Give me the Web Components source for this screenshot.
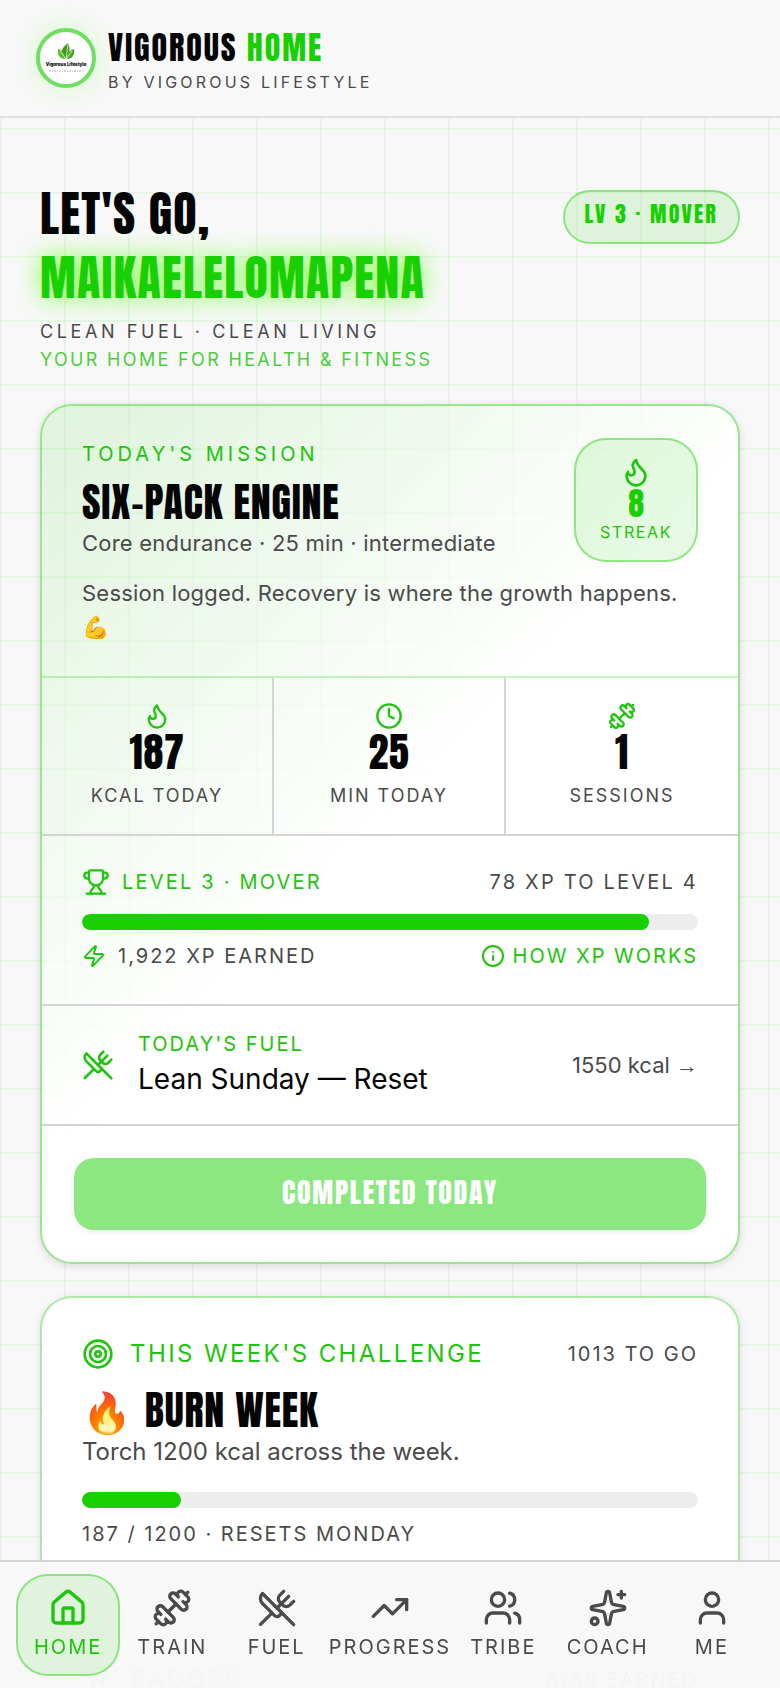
<!DOCTYPE html>
<html lang="en">
<head>
<meta charset="utf-8">
<meta name="viewport" content="width=device-width, initial-scale=1">
<title>Vigorous Home</title>
<style>
  :root {
    --green: #18d000;
    --green-text: #1fc40c;
    --ink: #050505;
    --muted: #4a4a4a;
    --line: #d4d4d4;
    --track: #ededed;
    --page: #f8f8f8;
    --tint: rgba(24, 208, 0, 0.11);
    --edge: rgba(24, 208, 0, 0.42);
    --display: Anton, Impact, "Roboto Condensed", sans-serif;
  }
  body {
    margin: 0;
    background: var(--page);
    color: var(--ink);
    font-family: Inter, "Liberation Sans", sans-serif;
    font-optical-sizing: none;
  }
</style>
</head>
<body>
<vh-app></vh-app>

<script>
const ICONS = {
  home: `<path d="M15 21v-8a1 1 0 0 0-1-1h-4a1 1 0 0 0-1 1v8"/><path d="M3 10a2 2 0 0 1 .709-1.528l7-6a2 2 0 0 1 2.582 0l7 6A2 2 0 0 1 21 10v9a2 2 0 0 1-2 2H5a2 2 0 0 1-2-2z"/>`,
  dumbbell: `<path d="M17.596 12.768a2 2 0 1 0 2.829-2.829l-1.768-1.767a2 2 0 0 0 2.828-2.829l-2.828-2.828a2 2 0 0 0-2.829 2.828l-1.767-1.768a2 2 0 1 0-2.829 2.829z"/><path d="m2.5 21.5 1.4-1.4"/><path d="m20.1 3.9 1.4-1.4"/><path d="M5.343 21.485a2 2 0 1 0 2.829-2.828l1.767 1.768a2 2 0 1 0 2.829-2.829l-6.364-6.364a2 2 0 1 0-2.829 2.829l1.768 1.767a2 2 0 0 0-2.828 2.829z"/><path d="m9.6 14.4 4.8-4.8"/>`,
  utensils: `<path d="m16 2-2.3 2.3a3 3 0 0 0 0 4.2l1.8 1.8a3 3 0 0 0 4.2 0L22 8"/><path d="M15 15 3.3 3.3a4.2 4.2 0 0 0 0 6l7.3 7.3c.7.7 2 .7 2.8 0L15 15Zm0 0 7 7"/><path d="m2.1 21.8 6.4-6.3"/><path d="m19 5-7 7"/>`,
  trend: `<path d="M16 7h6v6"/><path d="m22 7-8.5 8.5-5-5L2 17"/>`,
  users: `<path d="M16 21v-2a4 4 0 0 0-4-4H6a4 4 0 0 0-4 4v2"/><path d="M16 3.128a4 4 0 0 1 0 7.744"/><path d="M22 21v-2a4 4 0 0 0-3-3.87"/><circle cx="9" cy="7" r="4"/>`,
  sparkles: `<path d="M11.017 2.814a1 1 0 0 1 1.966 0l1.051 5.558a2 2 0 0 0 1.594 1.594l5.558 1.051a1 1 0 0 1 0 1.966l-5.558 1.051a2 2 0 0 0-1.594 1.594l-1.051 5.558a1 1 0 0 1-1.966 0l-1.051-5.558a2 2 0 0 0-1.594-1.594l-5.558-1.051a1 1 0 0 1 0-1.966l5.558-1.051a2 2 0 0 0 1.594-1.594z"/><path d="M20 2v4"/><path d="M22 4h-4"/><circle cx="4" cy="20" r="2"/>`,
  user: `<path d="M19 21v-2a4 4 0 0 0-4-4H9a4 4 0 0 0-4 4v2"/><circle cx="12" cy="7" r="4"/>`,
  flame: `<path d="M12 3q1 4 4 6.5t3 5.5a1 1 0 0 1-14 0 5 5 0 0 1 1-3 1 1 0 0 0 5 0c0-2-1.5-3-1.5-5q0-2 2.5-4"/>`,
  clock: `<circle cx="12" cy="12" r="10"/><path d="M12 6v6l4 2"/>`,
  trophy: `<path d="M10 14.66v1.626a2 2 0 0 1-.976 1.696A5 5 0 0 0 7 21.978"/><path d="M14 14.66v1.626a2 2 0 0 0 .976 1.696A5 5 0 0 1 17 21.978"/><path d="M18 9h1.5a1 1 0 0 0 0-5H18"/><path d="M4 22h16"/><path d="M6 9a6 6 0 0 0 12 0V3a1 1 0 0 0-1-1H7a1 1 0 0 0-1 1z"/><path d="M6 9H4.5a1 1 0 0 1 0-5H6"/>`,
  zap: `<path d="M4 14a1 1 0 0 1-.78-1.63l9.9-10.2a.5.5 0 0 1 .86.46l-1.92 6.02A1 1 0 0 0 13 10h7a1 1 0 0 1 .78 1.63l-9.9 10.2a.5.5 0 0 1-.86-.46l1.92-6.02A1 1 0 0 0 11 14z"/>`,
  info: `<circle cx="12" cy="12" r="10"/><path d="M12 16v-4"/><path d="M12 8h.01"/>`,
  target: `<circle cx="12" cy="12" r="10"/><circle cx="12" cy="12" r="6"/><circle cx="12" cy="12" r="2"/>`,
  medal: `<path d="m15.477 12.89 1.515 8.526a.5.5 0 0 1-.81.47l-3.58-2.687a1 1 0 0 0-1.197 0l-3.586 2.686a.5.5 0 0 1-.81-.469l1.514-8.526"/><circle cx="12" cy="8" r="6"/>`,
};

// Shared text rules, pulled into each shadow root that needs them
const TEXT_CSS = `
  h1, h2, h3, p { margin: 0; }
  h2, h3 {
    font: 40px/48px var(--display);
    letter-spacing: 0.02em;
    text-transform: uppercase;
  }
  .label { font-size: 20px; line-height: 28px; letter-spacing: 0.1em; text-transform: uppercase; }
  .green { color: var(--green-text); }
  .muted { color: var(--muted); }
  .row { display: flex; align-items: center; justify-content: space-between; }
`;

class VhElement extends HTMLElement {
  constructor() {
    super();
    this.attachShadow({ mode: "open" });
  }

  connectedCallback() {
    this.shadowRoot.innerHTML = this.render();
  }
}

// vh-icon: stroked 24-unit icon, sized by --size
class VhIcon extends VhElement {
  render() {
    return `
      <style>
        :host { display: block; flex: none; width: var(--size, 28px); height: var(--size, 28px); }
        svg { display: block; width: 100%; height: 100%; }
      </style>
      <svg viewBox="0 0 24 24" fill="none" stroke="currentColor" stroke-width="2"
        stroke-linecap="round" stroke-linejoin="round" aria-hidden="true">${ICONS[this.getAttribute("name")]}</svg>
    `;
  }
}

class VhLogo extends VhElement {
  render() {
    return `
      <style>
        :host {
          display: block;
          flex: none;
          box-sizing: border-box;
          width: 60px;
          height: 60px;
          border: 4px solid #70de60;
          border-radius: 50%;
          background: #fff;
          box-shadow: 0 0 28px rgba(100, 255, 60, 0.24);
        }
        svg { display: block; width: 100%; height: 100%; }
      </style>
      <svg viewBox="0 0 52 52" role="img" aria-label="Vigorous Lifestyle">
        <path fill="#3f9a1c" d="M26 27c-4-4-5-8-3-11 1-2 3-3 5-5 2 4 2 9 0 12-.6 1.5-1.2 3-2 4z"/>
        <path fill="#5cb82c" d="M25 27c-5 0-8-4-7-10 4 1 7 4 7 10z"/>
        <path fill="#4aa822" d="M27 27c0-6 3-9 7-10 1 6-2 10-7 10z"/>
        <path d="M28 12l-2 16M20 19l6 8M32 19l-6 8" fill="none" stroke="#fff" stroke-width=".7"/>
        <text x="26" y="34" text-anchor="middle" font-size="4.4" font-weight="900" fill="#111">Vigorous Lifestyle</text>
        <path d="M9 39h34" stroke="#aaa" stroke-width="1" stroke-dasharray="2 1 1 1"/>
      </svg>
    `;
  }
}

class VhHeader extends VhElement {
  render() {
    return `
      <style>
        ${TEXT_CSS}
        :host { display: block; background: rgba(248, 248, 248, 0.95); border-bottom: 2px solid #e0e0e0; }
        header { display: flex; align-items: flex-start; gap: 12px; padding: 28px 36px 20px; }
        .name { font: 32px/40px var(--display); letter-spacing: 0.06em; text-transform: uppercase; }
        .name span { color: var(--green); }
        .by { font-size: 16px; line-height: 28px; letter-spacing: 0.2em; text-transform: uppercase; }
      </style>
      <header>
        <vh-logo></vh-logo>
        <div>
          <p class="name">Vigorous <span>Home</span></p>
          <p class="by muted">by Vigorous Lifestyle</p>
        </div>
      </header>
    `;
  }
}

class VhHero extends VhElement {
  render() {
    return `
      <style>
        ${TEXT_CSS}
        :host { display: flex; justify-content: space-between; align-items: flex-start; }
        h1 { font: 48px/64px var(--display); letter-spacing: 0.025em; text-transform: uppercase; margin-bottom: 8px; }
        h1 span { display: block; color: var(--green); text-shadow: 0 0 24px rgba(90, 255, 20, 0.8); }
        .tag { font-size: 18px; line-height: 28px; text-transform: uppercase; }
        .fuel { letter-spacing: 0.2em; }
        .home { letter-spacing: 0.13em; opacity: 0.8; }
        .badge {
          font: 22px/28px var(--display);
          letter-spacing: 0.1em;
          margin-top: 8px;
          padding: 8px 20px 14px;
          border: 2px solid var(--edge);
          border-radius: 28px;
          background: var(--tint);
          color: var(--green);
          text-transform: uppercase;
          white-space: nowrap;
        }
      </style>
      <div>
        <h1>Let's go, <span>${this.getAttribute("name")}</span></h1>
        <p class="tag fuel muted">Clean fuel · Clean living</p>
        <p class="tag home green">Your home for health &amp; fitness</p>
      </div>
      <div class="badge"><slot></slot></div>
    `;
  }
}

// vh-progress: rounded meter, value in percent
class VhProgress extends VhElement {
  render() {
    const value = Number(this.getAttribute("value"));
    return `
      <style>
        :host { display: block; height: 16px; border-radius: 8px; background: var(--track); overflow: hidden; }
        .fill { width: ${value}%; height: 100%; border-radius: 8px; background: var(--green); }
      </style>
      <div class="fill" role="progressbar" aria-valuenow="${value}" aria-valuemin="0" aria-valuemax="100" aria-label="${this.getAttribute("label")}"></div>
    `;
  }
}

class VhStat extends VhElement {
  render() {
    return `
      <style>
        ${TEXT_CSS}
        :host { display: flex; flex-direction: column; align-items: center; padding: 24px 8px; }
        .value { font: 40px/44px var(--display); letter-spacing: 0.02em; margin-bottom: 8px; }
        .name { font-size: 18px; line-height: 28px; letter-spacing: 0.11em; text-transform: uppercase; }
      </style>
      <vh-icon class="green" name="${this.getAttribute("icon")}"></vh-icon>
      <p class="value">${this.getAttribute("value")}</p>
      <p class="name muted"><slot></slot></p>
    `;
  }
}

class VhStreak extends VhElement {
  render() {
    return `
      <style>
        ${TEXT_CSS}
        :host {
          display: flex;
          flex-direction: column;
          align-items: center;
          flex: none;
          padding: 16px 24px;
          border: 2px solid var(--edge);
          border-radius: 32px;
          background: var(--tint);
          color: var(--green-text);
        }
        vh-icon { --size: 32px; }
        .days { font: 32px/32px var(--display); color: var(--green); }
        .name { font-size: 16px; line-height: 24px; letter-spacing: 0.1em; text-transform: uppercase; }
      </style>
      <vh-icon name="flame"></vh-icon>
      <p class="days">${this.getAttribute("days")}</p>
      <p class="name">Streak</p>
    `;
  }
}

class VhMission extends VhElement {
  render() {
    return `
      <style>
        ${TEXT_CSS}
        :host {
          display: block;
          border: 2px solid var(--edge);
          border-radius: 32px;
          background: linear-gradient(135deg, var(--tint), #fff 50%) padding-box;
          box-shadow: 0 2px 8px rgba(0, 0, 0, 0.12);
          overflow: hidden;
        }
        section { border-top: 2px solid var(--line); }
        .intro { padding: 32px 40px; border-top: 0; }
        .top { display: flex; justify-content: space-between; align-items: flex-start; }
        .eyebrow { line-height: 32px; letter-spacing: 0.2em; margin-bottom: 8px; }
        .body { font-size: 22px; line-height: 34px; }
        .intro .body { letter-spacing: 0.01em; }
        .note { margin-top: 14px; }
        .stats { display: grid; grid-template-columns: repeat(3, 1fr); border-top-color: rgba(24, 208, 0, 0.24); }
        vh-stat:not(:last-child) { border-right: 2px solid var(--line); }
        .xp { padding: 32px 40px 34px; }
        .level { letter-spacing: 0.11em; }
        vh-progress { margin: 18px 0 12px; }
        .pair { display: flex; align-items: center; gap: 12px; }
        .small { --size: 24px; }
        button { font: inherit; letter-spacing: inherit; text-transform: inherit; border: 0; padding: 0; background: none; cursor: pointer; }
        button.pair { gap: 8px; }
        .fuel { display: flex; align-items: center; gap: 24px; padding: 24px 40px; --size: 32px; color: inherit; text-decoration: none; }
        .meal { flex: 1; }
        .meal .dish { font-size: 28px; line-height: 42px; }
        .arrow { font-family: "Liberation Sans", sans-serif; }
        .action { padding: 32px; }
        .action button {
          display: block;
          width: 100%;
          font: 28px/40px var(--display);
          letter-spacing: 0.06em;
          text-transform: uppercase;
          padding: 14px 16px 18px;
          border-radius: 20px;
          background: #8be880;
          color: #fff;
          box-shadow: 0 2px 6px rgba(0, 0, 0, 0.08);
        }
      </style>
      <section class="intro">
        <div class="top">
          <div>
            <p class="label eyebrow green">Today's mission</p>
            <h2>Six-pack engine</h2>
            <p class="body muted">Core endurance · 25 min · intermediate</p>
          </div>
          <vh-streak days="8"></vh-streak>
        </div>
        <p class="body note muted">Session logged. Recovery is where the growth happens. 💪</p>
      </section>
      <section class="stats">
        <vh-stat icon="flame" value="187">kcal today</vh-stat>
        <vh-stat icon="clock" value="25">min today</vh-stat>
        <vh-stat icon="dumbbell" value="1">sessions</vh-stat>
      </section>
      <section class="xp label">
        <div class="row level">
          <span class="pair green"><vh-icon name="trophy"></vh-icon>Level 3 · Mover</span>
          <span class="muted">78 XP to level 4</span>
        </div>
        <vh-progress value="92" label="Level progress"></vh-progress>
        <div class="row">
          <span class="pair small muted"><vh-icon class="green" name="zap"></vh-icon>1,922 XP earned</span>
          <button class="pair small green" type="button"><vh-icon name="info"></vh-icon>How XP works</button>
        </div>
      </section>
      <section>
        <a class="fuel" href="#fuel">
          <vh-icon class="green" name="utensils"></vh-icon>
          <div class="meal">
            <p class="label green">Today's fuel</p>
            <p class="dish">Lean Sunday — Reset</p>
          </div>
          <span class="body muted">1550 kcal <span class="arrow">→</span></span>
        </a>
      </section>
      <section class="action">
        <button type="button">Completed today</button>
      </section>
    `;
  }
}

// vh-panel: plain white card with an icon, an eyebrow and a side note
class VhPanel extends VhElement {
  render() {
    return `
      <style>
        ${TEXT_CSS}
        :host {
          display: block;
          padding: 40px;
          border: 2px solid rgba(24, 208, 0, 0.3);
          border-radius: 32px;
          background: #fff padding-box;
          box-shadow: 0 2px 8px rgba(0, 0, 0, 0.1);
        }
        .pair { display: flex; align-items: center; gap: 16px; --size: 32px; }
        .eyebrow { font-size: 24px; line-height: 32px; letter-spacing: 0.1em; text-transform: uppercase; }
      </style>
      <div class="row">
        <span class="pair green"><vh-icon name="${this.getAttribute("icon")}"></vh-icon><span class="eyebrow">${this.getAttribute("heading")}</span></span>
        <span class="label muted">${this.getAttribute("aside")}</span>
      </div>
      <slot></slot>
    `;
  }
}

class VhChallenge extends VhElement {
  render() {
    return `
      <style>
        ${TEXT_CSS}
        :host { display: block; }
        h3 { display: flex; gap: 12px; margin-top: 16px; }
        .desc { font-size: 24px; line-height: 36px; }
        vh-progress { margin: 22px 0 12px; }
      </style>
      <vh-panel icon="target" heading="This week's challenge" aside="1013 to go">
        <h3><span>🔥</span>Burn week</h3>
        <p class="desc muted">Torch 1200 kcal across the week.</p>
        <vh-progress value="16" label="Challenge progress"></vh-progress>
        <p class="label muted">187 / 1200 · Resets Monday</p>
      </vh-panel>
    `;
  }
}

class VhNav extends VhElement {
  render() {
    const tabs = [
      ["home", "Home"],
      ["dumbbell", "Train"],
      ["utensils", "Fuel"],
      ["trend", "Progress"],
      ["users", "Tribe"],
      ["sparkles", "Coach"],
      ["user", "Me"],
    ];
    return `
      <style>
        :host { display: block; background: rgba(248, 248, 248, 0.98); border-top: 2px solid var(--line); }
        nav { display: grid; grid-auto-flow: column; grid-auto-columns: 1fr; padding: 12px 16px; }
        a {
          display: flex;
          flex-direction: column;
          align-items: center;
          gap: 4px;
          padding: 14px 0;
          border-radius: 32px;
          color: var(--muted);
          font-size: 20px;
          line-height: 30px;
          letter-spacing: 0.1em;
          text-transform: uppercase;
          text-decoration: none;
          --size: 40px;
        }
        a.active { padding: 12px 0; color: var(--green-text); background: var(--tint); border: 2px solid var(--edge); }
      </style>
      <nav>
        ${tabs.map(([icon, name], i) => `
          <a href="#${name.toLowerCase()}" ${i === 0 ? `class="active" aria-current="page"` : ""}>
            <vh-icon name="${icon}"></vh-icon>${name}
          </a>
        `).join("")}
      </nav>
    `;
  }
}

class VhApp extends VhElement {
  render() {
    return `
      <style>
        :host {
          display: flex;
          flex-direction: column;
          height: 100vh;
          overflow: hidden;
          background:
            linear-gradient(rgba(24, 208, 0, 0.07) 2px, transparent 2px) 0 0 / 64px 64px,
            linear-gradient(90deg, rgba(24, 208, 0, 0.07) 2px, transparent 2px) 0 0 / 64px 64px;
        }
        main { flex: 1; overflow-y: auto; scrollbar-width: none; padding: 64px 40px 160px; }
        vh-hero { margin-bottom: 30px; }
        vh-mission, vh-challenge { margin-bottom: 32px; }
        vh-nav { position: fixed; inset: auto 0 0; }
      </style>
      <vh-header></vh-header>
      <main>
        <vh-hero name="Maikaelelomapena">LV 3 · Mover</vh-hero>
        <vh-mission></vh-mission>
        <vh-challenge></vh-challenge>
        <vh-panel icon="medal" heading="Badges" aside="8/35 earned"></vh-panel>
      </main>
      <vh-nav></vh-nav>
    `;
  }
}

customElements.define("vh-icon", VhIcon);
customElements.define("vh-logo", VhLogo);
customElements.define("vh-progress", VhProgress);
customElements.define("vh-stat", VhStat);
customElements.define("vh-streak", VhStreak);
customElements.define("vh-header", VhHeader);
customElements.define("vh-hero", VhHero);
customElements.define("vh-mission", VhMission);
customElements.define("vh-panel", VhPanel);
customElements.define("vh-challenge", VhChallenge);
customElements.define("vh-nav", VhNav);
customElements.define("vh-app", VhApp);
</script>
</body>
</html>
